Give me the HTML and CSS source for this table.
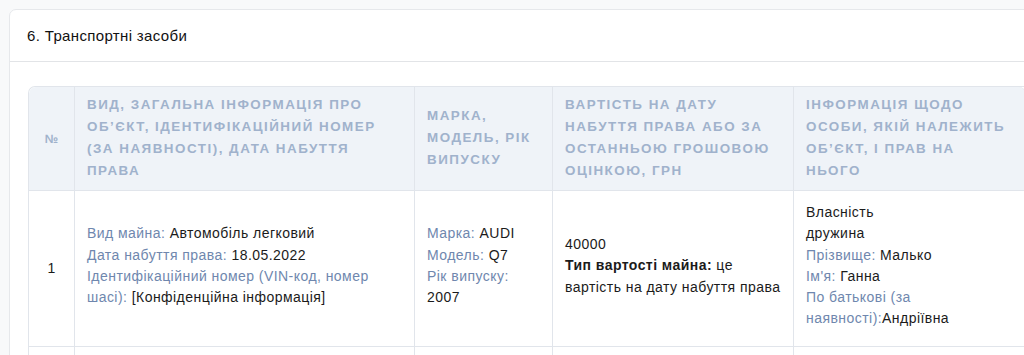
FILE: index.html
```html
<!DOCTYPE html>
<html lang="uk">
<head>
<meta charset="utf-8">
<title>Транспортні засоби</title>
<link rel="stylesheet" href="styles.css">
</head>
<body>
<div class="card">
  <div class="card-header">6. Транспортні засоби</div>
  <div class="card-body">
    <table class="data-table">
      <colgroup>
        <col class="c-num">
        <col class="c-info">
        <col class="c-brand">
        <col class="c-cost">
        <col class="c-owner">
      </colgroup>
      <thead>
        <tr>
          <th class="num">№</th>
          <th>Вид, загальна інформація про об’єкт, ідентифікаційний номер (за наявності), дата набуття права</th>
          <th>Марка, модель, рік випуску</th>
          <th>Вартість на дату набуття права або за останньою грошовою оцінкою, грн</th>
          <th>Інформація щодо особи, якій належить об’єкт, і прав на нього</th>
        </tr>
      </thead>
      <tbody>
        <tr>
          <td class="num">1</td>
          <td>
            <div><span class="lbl">Вид майна:</span> Автомобіль легковий</div>
            <div><span class="lbl">Дата набуття права:</span> 18.05.2022</div>
            <div><span class="lbl">Ідентифікаційний номер (VIN-код, номер шасі):</span> [Конфіденційна інформація]</div>
          </td>
          <td>
            <div><span class="lbl">Марка:</span> AUDI</div>
            <div><span class="lbl">Модель:</span> Q7</div>
            <div><span class="lbl">Рік випуску:</span> 2007</div>
          </td>
          <td>
            <div>40000</div>
            <div><b>Тип вартості майна:</b> це вартість на дату набуття права</div>
          </td>
          <td>
            <div>Власність</div>
            <div>дружина</div>
            <div><span class="lbl">Прізвище:</span> Малько</div>
            <div><span class="lbl">Ім'я:</span> Ганна</div>
            <div><span class="lbl">По батькові (за наявності):</span>Андріївна</div>
          </td>
        </tr>
        <tr class="next">
          <td class="num"></td><td></td><td></td><td></td><td></td>
        </tr>
      </tbody>
    </table>
  </div>
</div>
</body>
</html>
```

FILE: styles.css
```css
html, body {
  margin: 0;
  padding: 0;
  background: #f8f9fa;
  overflow: hidden;
}
body {
  padding: 9px 0 0 9px;
  font-family: "Liberation Sans", Arial, sans-serif;
  color: #1b1b1b;
}
.card {
  width: 1060px;
  background: #ffffff;
  border: 1px solid #e6e8eb;
  border-radius: 7px;
}
.card-header {
  padding: 16px 17px 16px;
  font-size: 15px;
  letter-spacing: 0.35px;
  line-height: 19px;
  color: #111;
  border-bottom: 1px solid #e2e4e7;
}
.card-body {
  padding: 24px 18px 20px;
}
.data-table {
  border-collapse: separate;
  border-spacing: 0;
  table-layout: fixed;
  width: 997px;
  border-top: 1px solid #e1e5eb;
  border-left: 1px solid #e1e5eb;
  border-top-left-radius: 7px;
}
.c-num { width: 46px; }
.c-info { width: 340px; }
.c-brand { width: 138px; }
.c-cost { width: 241px; }
.c-owner { width: 232px; }
.data-table th,
.data-table td {
  border-right: 1px solid #e1e5eb;
  border-bottom: 1px solid #e1e5eb;
  vertical-align: middle;
  text-align: left;
}
.data-table thead th:first-child {
  border-top-left-radius: 7px;
}
.data-table thead th:last-child {
  border-top-right-radius: 7px;
}
.data-table th {
  background: #eff3f8;
  color: #a0b2cc;
  font-size: 13.4px;
  font-weight: bold;
  letter-spacing: 1.5px;
  text-transform: uppercase;
  line-height: 22px;
  padding: 7px 12px 8px;
}
.data-table th.num {
  text-transform: none;
  text-align: center;
  letter-spacing: 0;
  font-size: 12px;
  padding: 0;
}
.data-table td {
  font-size: 14px;
  letter-spacing: 0.45px;
  line-height: 21.3px;
  padding: 11px 12px 16px;
}
.data-table td.num {
  text-align: center;
  padding: 0;
}
.lbl {
  color: #6f87ae;
}
.data-table tr.next td {
  height: 40px;
  padding: 0;
}
```
